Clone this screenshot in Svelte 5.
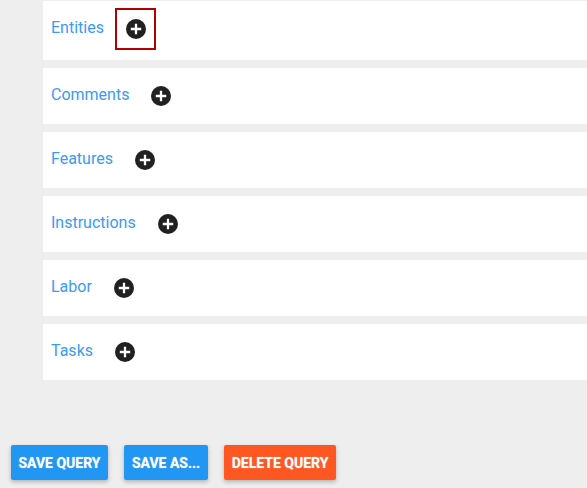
<script>
  const rows = [
    { name: 'Entities', gap: 22, selected: true },
    { name: 'Comments', gap: 22 },
    { name: 'Features', gap: 22 },
    { name: 'Instructions', gap: 22 },
    { name: 'Labor', gap: 22 },
    { name: 'Tasks', gap: 22 }
  ];
</script>

{#snippet plus()}
  <svg class="plus" width="20" height="20" viewBox="0 0 20 20" aria-hidden="true">
    <circle cx="10" cy="10" r="10" fill="#212121" />
    <path d="M10 4.8v10.4M4.8 10h10.4" stroke="#fff" stroke-width="2.3" />
  </svg>
{/snippet}

<div class="page">
  <div class="list">
    {#each rows as row, i}
      <section class="row" class:first={i === 0}>
        <span class="name">{row.name}</span>
        <span class="add" class:selected={row.selected} style="margin-left: {row.gap}px">
          {@render plus()}
        </span>
      </section>
    {/each}
  </div>

  <div class="actions">
    <button class="btn save-query">SAVE QUERY</button>
    <button class="btn save-as">SAVE AS...</button>
    <button class="btn delete">DELETE QUERY</button>
  </div>
</div>

<style>
  :global(body) {
    margin: 0;
    background: #eeeeee;
    font-family: Roboto, "Liberation Sans", sans-serif;
  }

  .page {
    height: 488px;
    overflow: hidden;
    display: flex;
    flex-direction: column;
  }

  .list {
    margin-left: 43px;
    padding-top: 1px;
    display: flex;
    flex-direction: column;
    gap: 8px;
  }

  .row {
    box-sizing: border-box;
    height: 56px;
    background: #fff;
    display: flex;
    align-items: center;
    padding-left: 8px;
  }

  .row.first {
    height: 59px;
    padding-bottom: 3px;
  }

  .name {
    font-size: 16px;
    color: #3a9af4;
    margin-top: -4px;
  }

  .add {
    position: relative;
    display: flex;
    width: 20px;
    height: 20px;
  }

  .plus {
    display: block;
  }

  .add.selected::after {
    content: "";
    position: absolute;
    inset: -11px -10px -11px -11px;
    border: 2px solid #b00000;
  }

  .actions {
    margin-top: 65px;
    margin-left: 11px;
    display: flex;
    gap: 16px;
  }

  .btn {
    height: 35px;
    border: 0;
    padding: 0;
    border-radius: 2px;
    color: #fff;
    font-family: inherit;
    font-size: 14px;
    font-weight: 700;
    text-shadow: 0 0 1px rgba(255, 255, 255, 0.6);
    box-shadow: 0 2px 4px rgba(0, 0, 0, 0.25);
  }

  .save-query { width: 97px; background: #2196f3; }
  .save-as { width: 84px; background: #2196f3; }
  .delete { width: 112px; background: #ff5722; }
</style>
